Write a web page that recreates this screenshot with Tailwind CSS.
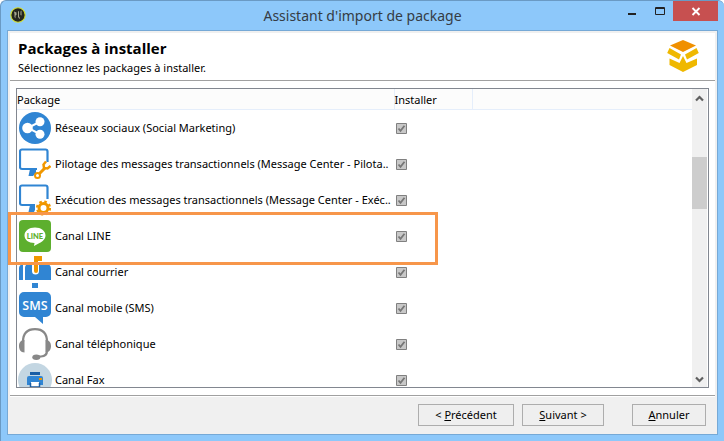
<!DOCTYPE html>
<html lang="fr">
<head>
<meta charset="utf-8">
<title>Assistant d'import de package</title>
<script src="https://cdn.jsdelivr.net/npm/@tailwindcss/browser@4"></script>
</head>
<body class="h-screen overflow-hidden bg-white">
<div class="flex h-full flex-col rounded-t-md border-t border-l border-[#6a9ac4] bg-[#8dc8fa] pr-1.5 pb-1.5 pl-1.5 font-['Noto_Sans','Open_Sans',sans-serif] text-[11px] leading-4 text-black">
  <header class="grid h-[29px] shrink-0 grid-cols-[1fr_auto_1fr]">
    <svg class="mt-1.5 ml-[3px] h-4 w-4" viewBox="0 0 16 16"><circle cx="8" cy="8" r="7.2" fill="#24261f" stroke="#d5df2c" stroke-width="1.1"/><path d="M4 4.500l2.500 1v2.500l-1 .5v3l-1-1.500V7zM8 4l1 .5v5l1 1.500-.5 1-1.500-2zM10.500 4.500l1-1v5l-1-.5z" fill="#aaa991"/></svg>
    <h1 class="self-center text-[14px] leading-5 text-[#353c44] font-['Noto_Sans',sans-serif]">Assistant d'import de package</h1>
    <div class="flex h-5 justify-end">
      <button aria-label="Réduire" class="flex w-7 justify-center"><svg class="h-5 w-7" viewBox="0 0 28 20"><path d="M10 12h8v2h-8z" fill="#222"/></svg></button>
      <button aria-label="Agrandir" class="w-[27px]"><svg class="h-5 w-[27px]" viewBox="0 0 27 20"><path d="M9.500 6.500h9v7h-9zM9.500 7.500h9" fill="none" stroke="#222"/></svg></button>
      <button aria-label="Fermer" class="w-[45px] bg-[#c75050]"><svg class="h-5 w-[45px]" viewBox="0 0 45 20"><path d="M19.500 7l7 7m0-7l-7 7" stroke="#fff" stroke-width="1.900"/></svg></button>
    </div>
  </header>
  <main class="flex min-h-0 flex-1 flex-col border border-[#76a9d6] bg-[#f0f0f0]">
    <div class="mx-0.5 mt-0.5 flex min-h-0 flex-1 flex-col bg-white">
      <div class="flex h-12 shrink-0 justify-between border-b border-[#a0a0a0] pt-[5px] pr-4 pl-2">
        <div>
          <h2 class="text-[15px] leading-5 font-bold font-['Open_Sans',sans-serif]">Packages à installer</h2>
          <p class="mt-0.5">Sélectionnez les packages à installer.</p>
        </div>
        <svg class="mt-0.5 h-8 w-8" viewBox="0 0 32 32"><path d="M3 5.500L16 0l13 5.500L16 12z" fill="#f09000"/><path d="M2.500 8L14 14.500l-2 5L.2 13zM29.500 8L18 14.500l2 5L31.800 13zM2.500 18.500l10 4.500L16 16l3.500 7 10.500-4.500V25l-14 7-13.500-7z" fill="#efb800"/></svg>
      </div>
      <div class="relative mx-1.5 mt-[7px] mb-[7px] flex min-h-0 flex-1">
        <div class="flex min-w-0 flex-1 border border-[#828790]">
          <div class="min-w-0 flex-1 overflow-hidden">
            <table class="w-full table-fixed border-collapse text-left">
              <colgroup><col class="w-[377px]"><col class="w-[78px]"><col></colgroup>
              <thead class="bg-[#fcfcfc]">
                <tr class="h-[21px] shadow-[inset_0_-1px_#e5eefb]"><th class="border-r border-[#e5eefb] p-0 font-normal">Package</th><th class="border-r border-[#e5eefb] p-0 font-normal">Installer</th><td></td></tr>
              </thead>
              <tbody>
                <tr><td class="p-0"><label for="p1" class="flex h-9 items-center gap-1 pl-0.5 whitespace-nowrap"><svg class="h-8 w-8 shrink-0" viewBox="0 0 32 32"><circle cx="16" cy="16" r="16" fill="#3085d3"/><path d="M21.500 9.500L9 15.800 21.500 22.500" fill="none" stroke="#fff" stroke-width="2"/><g fill="#fff"><circle cx="8.500" cy="16" r="5.300"/><circle cx="21" cy="9.700" r="4.500"/><circle cx="21" cy="22.300" r="4.500"/></g></svg>Réseaux sociaux (Social Marketing)</label></td><td class="p-0 pl-0.5"><input id="p1" type="checkbox" checked disabled class="peer sr-only"><svg class="h-[11px] w-[11px]" viewBox="0 0 11 11"><path d="M.5.5h10v10H.5z" fill="#c8c8c8" stroke="#808080"/><path d="M2.500 5.500l2 2.300 4-5" fill="none" stroke="#777" stroke-width="1.800"/></svg></td><td></td></tr>
                <tr><td class="p-0"><label for="p2" class="flex h-9 items-center gap-1 pl-0.5 whitespace-nowrap"><svg class="h-8 w-8 shrink-0" viewBox="0 0 32 32"><path d="M28.500 14V3.500a2 2 0 0 0-2-2h-23.500a2 2 0 0 0-2 2v15.500a2 2 0 0 0 2 2H18" fill="none" stroke="#3085d3" stroke-width="2.200"/><path d="M11 21h6v4l-3 3H9.500z" fill="#3085d3"/><path d="M20.500 25.500l6-6" stroke="#f09700" stroke-width="3"/><circle cx="18.500" cy="27.500" r="2.500" fill="none" stroke="#f09700" stroke-width="2"/><path d="M27 13.500l-2.500 3 .5 3.500 3.500.5 3-2.500" fill="none" stroke="#f09700" stroke-width="2.500"/></svg>Pilotage des messages transactionnels (Message Center - Pilota..</label></td><td class="p-0 pl-0.5"><input id="p2" type="checkbox" checked disabled class="peer sr-only"><svg class="h-[11px] w-[11px]" viewBox="0 0 11 11"><path d="M.5.5h10v10H.5z" fill="#c8c8c8" stroke="#808080"/><path d="M2.500 5.500l2 2.300 4-5" fill="none" stroke="#777" stroke-width="1.800"/></svg></td><td></td></tr>
                <tr><td class="p-0"><label for="p3" class="flex h-9 items-center gap-1 pl-0.5 whitespace-nowrap"><svg class="h-8 w-8 shrink-0" viewBox="0 0 32 32"><path d="M28.500 15V3.500a2 2 0 0 0-2-2h-23.500a2 2 0 0 0-2 2v15.500a2 2 0 0 0 2 2H16" fill="none" stroke="#3085d3" stroke-width="2.200"/><path d="M11 21h5v5l-1 2H9.500z" fill="#3085d3"/><circle cx="24.500" cy="24" r="4.500" fill="none" stroke="#f09700" stroke-width="3"/><circle cx="24.500" cy="24" r="6.500" fill="none" stroke="#f09700" stroke-width="2.200" stroke-dasharray="2.600 2.505"/></svg>Exécution des messages transactionnels (Message Center - Exéc..</label></td><td class="p-0 pl-0.5"><input id="p3" type="checkbox" checked disabled class="peer sr-only"><svg class="h-[11px] w-[11px]" viewBox="0 0 11 11"><path d="M.5.5h10v10H.5z" fill="#c8c8c8" stroke="#808080"/><path d="M2.500 5.500l2 2.300 4-5" fill="none" stroke="#777" stroke-width="1.800"/></svg></td><td></td></tr>
                <tr><td class="p-0"><label for="p4" class="flex h-9 items-center gap-1 pl-0.5 whitespace-nowrap"><svg class="h-8 w-8 shrink-0" viewBox="0 0 32 32"><rect width="32" height="32" rx="4" fill="#5daf2e"/><path d="M16 7.500c6 0 10.500 3.500 10.500 8 0 3.500-3 6-6 7.500L15 26l.5-3C9.500 23 5.500 20 5.500 15.500S10 7.500 16 7.500z" fill="#fff"/><text x="16" y="18.500" text-anchor="middle" font-family="Lato, sans-serif" font-size="7.500" font-weight="900" fill="#5daf2e">LINE</text></svg>Canal LINE</label></td><td class="p-0 pl-0.5"><input id="p4" type="checkbox" checked disabled class="peer sr-only"><svg class="h-[11px] w-[11px]" viewBox="0 0 11 11"><path d="M.5.5h10v10H.5z" fill="#c8c8c8" stroke="#808080"/><path d="M2.500 5.500l2 2.300 4-5" fill="none" stroke="#777" stroke-width="1.800"/></svg></td><td></td></tr>
                <tr><td class="p-0"><label for="p5" class="flex h-9 items-center gap-1 pl-0.5 whitespace-nowrap"><svg class="h-8 w-8 shrink-0" viewBox="0 0 32 32"><path d="M0 24V12q0-3 4-4v16zM6 24V12q0-4 4-4h17q5 0 5 5v11z" fill="#3085d3"/><path d="M13 8v7a3 3 0 0 0 7 0V8z" fill="#fff"/><path d="M15 0h8v5h-4v10a2 2 0 0 1-4 0z" fill="#f09700"/><path d="M13 27h6v5h-6z" fill="#3085d3"/></svg>Canal courrier</label></td><td class="p-0 pl-0.5"><input id="p5" type="checkbox" checked disabled class="peer sr-only"><svg class="h-[11px] w-[11px]" viewBox="0 0 11 11"><path d="M.5.5h10v10H.5z" fill="#c8c8c8" stroke="#808080"/><path d="M2.500 5.500l2 2.300 4-5" fill="none" stroke="#777" stroke-width="1.800"/></svg></td><td></td></tr>
                <tr><td class="p-0"><label for="p6" class="flex h-9 items-center gap-1 pl-0.5 whitespace-nowrap"><svg class="h-8 w-8 shrink-0" viewBox="0 0 32 32"><path d="M5 0h22a5 5 0 0 1 5 5v15a5 5 0 0 1-5 5h-3v7l-8-7H5a5 5 0 0 1-5-5V5a5 5 0 0 1 5-5z" fill="#3085d3"/><text x="16" y="17.500" text-anchor="middle" font-family="'Open Sans', sans-serif" font-size="12.500" font-weight="600" fill="#fff">SMS</text></svg>Canal mobile (SMS)</label></td><td class="p-0 pl-0.5"><input id="p6" type="checkbox" checked disabled class="peer sr-only"><svg class="h-[11px] w-[11px]" viewBox="0 0 11 11"><path d="M.5.5h10v10H.5z" fill="#c8c8c8" stroke="#808080"/><path d="M2.500 5.500l2 2.300 4-5" fill="none" stroke="#777" stroke-width="1.800"/></svg></td><td></td></tr>
                <tr><td class="p-0"><label for="p7" class="flex h-9 items-center gap-1 pl-0.5 whitespace-nowrap"><svg class="h-8 w-8 shrink-0" viewBox="0 0 32 32"><path d="M4 14C4 5 9 1.200 16 1.200S28 5 28 14v9q0 5-6 5.500h-3" fill="none" stroke="#888" stroke-width="2.200"/><path d="M5.500 12v12.500C1.500 24.500 0 21 0 18s1.500-6 5.500-6zM26.500 12v12.500c4 0 5.500-3.500 5.500-6.500s-1.500-6-5.500-6z" fill="#888"/><ellipse cx="17.300" cy="29.200" rx="4" ry="2.700" fill="#888"/></svg>Canal téléphonique</label></td><td class="p-0 pl-0.5"><input id="p7" type="checkbox" checked disabled class="peer sr-only"><svg class="h-[11px] w-[11px]" viewBox="0 0 11 11"><path d="M.5.5h10v10H.5z" fill="#c8c8c8" stroke="#808080"/><path d="M2.500 5.500l2 2.300 4-5" fill="none" stroke="#777" stroke-width="1.800"/></svg></td><td></td></tr>
                <tr><td class="p-0"><label for="p8" class="flex h-9 items-center gap-1 pl-0.5 whitespace-nowrap"><svg class="h-8 w-8 shrink-0 overflow-visible" viewBox="0 0 32 32"><circle cx="16" cy="16" r="17" fill="#c3d6e2"/><path d="M11 8h10v3H11z" fill="#1a5ea5"/><path d="M8 14a2 2 0 0 1 2-2h12a2 2 0 0 1 2 2v7H8z" fill="#3085d3"/><path d="M12 18h8v6h-8z" fill="#fff"/><path d="M11.500 19v4h9v-4" fill="none" stroke="#1a5ea5" stroke-width="1.500"/><path d="M20 14h3v2h-3z" fill="#f09700"/></svg>Canal Fax</label></td><td class="p-0 pl-0.5"><input id="p8" type="checkbox" checked disabled class="peer sr-only"><svg class="h-[11px] w-[11px]" viewBox="0 0 11 11"><path d="M.5.5h10v10H.5z" fill="#c8c8c8" stroke="#808080"/><path d="M2.500 5.500l2 2.300 4-5" fill="none" stroke="#777" stroke-width="1.800"/></svg></td><td></td></tr>
              </tbody>
            </table>
          </div>
          <div class="mr-px flex w-[15px] flex-col justify-between bg-[#f0f0f0]">
            <svg class="h-[17px] w-[15px]" viewBox="0 0 15 17"><path d="M4 11.500L7.500 8l3.500 3.500" fill="none" stroke="#606060" stroke-width="2.200"/></svg>
            <div class="flex-1 pt-[51px]"><div class="h-[52px] bg-[#cdcdcd]"></div></div>
            <svg class="h-[17px] w-[15px]" viewBox="0 0 15 17"><path d="M4 7.500L7.500 11 11 7.500" fill="none" stroke="#606060" stroke-width="2.200"/></svg>
          </div>
        </div>
        <div class="pointer-events-none absolute top-[124px] -left-2 h-[53px] w-[430px] border-3 border-[#f7964a]"></div>
      </div>
    </div>
    <footer class="mx-0.5 flex h-[39px] shrink-0 items-center justify-end border-t border-[#a0a0a0] pr-[9px] shadow-[inset_0_1px_#ffffff]">
      <button class="mr-2 h-[22px] w-24 border border-[#adadad] bg-[#efefef]">&lt; <u>P</u>récédent</button>
      <button class="mr-7 h-[22px] w-[82px] border border-[#adadad] bg-[#efefef]"><u>S</u>uivant &gt;</button>
      <button class="h-[22px] w-[74px] border border-[#adadad] bg-[#efefef]"><u>A</u>nnuler</button>
    </footer>
  </main>
</div>
</body>
</html>
